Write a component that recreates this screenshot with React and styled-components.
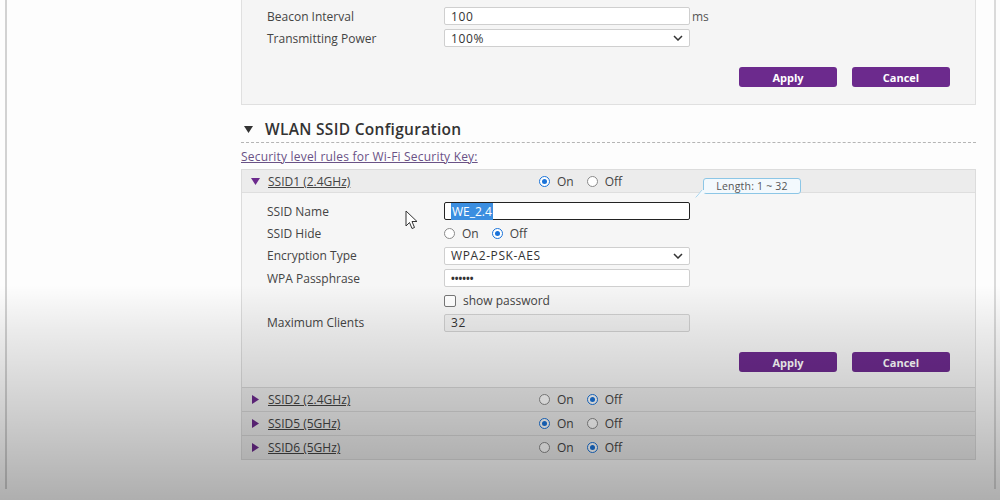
import styled, { createGlobalStyle } from "styled-components";

const GlobalStyle = createGlobalStyle`
  html, body {
    margin: 0;
    padding: 0;
    background: #fff;
    font-family: "Open Sans", "Noto Sans", "Liberation Sans", sans-serif;
    color: #333;
  }
`

const Page = styled.div`
  position: relative;
  width: 1000px;
  height: 500px;
  overflow: hidden;
  padding: 0 4px 0 5px;
  box-sizing: border-box;
  background: #fdfdfd;
`

const Frame = styled.div`
  height: 100%;
  border-left: 2px solid #d2d2d2;
  border-right: 2px solid #dadada;
  padding: 0 18px 0 234px;
  box-sizing: border-box;
`

const Shade = styled.div`
  position: absolute;
  inset: 0;
  pointer-events: none;
  background: linear-gradient(to bottom, rgba(0,0,0,0) 0%, rgba(0,0,0,0) 57%, rgba(0,0,0,0.07) 66%, rgba(0,0,0,0.18) 82%, rgba(0,0,0,0.31) 100%);
`

const Panel = styled.div`
  background: #f5f5f5;
  border: 1px solid #e0e0e0;
  margin-top: -11px;
  padding: 17px 25px 17px 25px;
  display: flex;
  flex-direction: column;
  gap: 4px;
`

const Row = styled.div`
  display: flex;
  align-items: center;
  height: 18px;
  font-size: 12px;
  color: #444;
`

const Label = styled.div`
  width: 177px;
  flex-shrink: 0;
  color: #444;
  font-size: 12px;
`

const TextBox = styled.div`
  position: relative;
  width: 246px;
  height: 18px;
  box-sizing: border-box;
  border: 1px solid ${p => (p.$focus ? "#222" : "#cfcfcf")};
  border-radius: 2px;
  background: ${p => (p.$disabled ? "#efefef" : "#fff")};
  display: flex;
  align-items: center;
  justify-content: space-between;
  padding: 0 6px 0 6px;
  font-size: 12px;
  letter-spacing: 0.6px;
  color: #333;
`

const Unit = styled.span`
  margin-left: 2px;
  font-size: 12px;
  color: #555;
`

const Selected = styled.span`
  background: #3b8ee0;
  color: #fff;
  padding: 0 1px;
  letter-spacing: 0;
`

const Dots = styled.span`
  font-size: 10px;
  font-weight: bold;
  letter-spacing: 0;
`

const Buttons = styled.div`
  display: flex;
  justify-content: flex-end;
  gap: 15px;
  margin-top: ${p => p.$top || 19}px;
`

const Btn = styled.button`
  width: 98px;
  height: 20px;
  border: none;
  border-radius: 3px;
  background: #6c2a8d;
  color: #fff;
  font-family: inherit;
  font-size: 11px;
  font-weight: bold;
  padding: 0;
`

const Heading = styled.div`
  margin-top: 14px;
  display: flex;
  align-items: center;
  gap: 12px;
  height: 20px;
  padding-left: 3px;
  font-size: 15.5px;
  font-weight: 600;
  color: #333;
  letter-spacing: 0.3px;
`

const Dashed = styled.div`
  margin-top: 3px;
  border-top: 1px dashed #b5b5b5;
`

const SecLink = styled.a`
  display: block;
  margin-top: 5px;
  font-size: 12px;
  letter-spacing: 0.2px;
  color: #6a5286;
  text-decoration: underline;
`

const SsidList = styled.div`
  margin-top: 4px;
  border: 1px solid #dcdcdc;
`

const SsidHead = styled.div`
  display: flex;
  align-items: center;
  height: ${p => (p.$first ? 22 : 23)}px;
  background: #ececec;
  border-top: ${p => (p.$first ? "none" : "1px solid #d6d6d6")};
  font-size: 12px;
`

const Caret = styled.div`
  width: 26px;
  display: flex;
  justify-content: center;
  padding-left: 1px;
  box-sizing: border-box;
`

const SsidName = styled.a`
  width: 271px;
  color: #444;
  text-decoration: underline;
`

const RadioGroup = styled.div`
  display: flex;
  align-items: center;
`

const RadioItem = styled.label`
  display: flex;
  align-items: center;
  gap: 7px;
  margin-right: 13px;
  font-size: 12px;
  color: #444;
`

const Circle = styled.span`
  width: 11px;
  height: 11px;
  box-sizing: border-box;
  border-radius: 50%;
  border: 1px solid ${p => (p.$on ? "#1a73d9" : "#8a8a8a")};
  background: #fff;
  display: flex;
  align-items: center;
  justify-content: center;
  &::after {
    content: "";
    width: 5px;
    height: 5px;
    border-radius: 50%;
    background: ${p => (p.$on ? "#1a73d9" : "transparent")};
  }
`

const SsidBody = styled.div`
  background: #f6f6f6;
  border-top: 1px solid #dedede;
  padding: 9px 25px 15px 25px;
  display: flex;
  flex-direction: column;
  gap: 4.4px;
`

const Check = styled.span`
  width: 10px;
  height: 10px;
  border: 1px solid #777;
  border-radius: 2px;
  background: #fff;
  margin: 0 7px 0 0;
`

const Tip = styled.div`
  position: absolute;
  left: 258px;
  top: -25px;
  width: 98px;
  height: 16px;
  box-sizing: border-box;
  border: 1px solid #8cc6e6;
  border-radius: 3px;
  background: #f3f9fd;
  font-size: 10.5px;
  letter-spacing: 0.2px;
  color: #555;
  display: flex;
  align-items: center;
  justify-content: center;
  white-space: nowrap;
  &::before {
    content: "";
    position: absolute;
    left: -6px;
    bottom: -5px;
    width: 8px;
    height: 8px;
    border-left: 1px solid #8cc6e6;
    background: #f3f9fd;
    transform: skewX(-40deg);
    clip-path: polygon(0 0, 100% 0, 0 100%);
  }
`

const Cursor = styled.svg`
  position: absolute;
  left: 405px;
  top: 210px;
`

function Radio({ on, off }) {
  return (
    <RadioGroup>
      <RadioItem><Circle $on={on} />On</RadioItem>
      <RadioItem><Circle $on={off} />Off</RadioItem>
    </RadioGroup>
  )
}

function Chevron() {
  return (
    <svg width="10" height="6" viewBox="0 0 10 6">
      <path d="M1 1 L5 5 L9 1" fill="none" stroke="#333" strokeWidth="1.5" />
    </svg>
  )
}

function Tri({ down, color }) {
  return down ? (
    <svg width="9" height="7" viewBox="0 0 9 7"><path d="M0 0 H9 L4.5 7 Z" fill={color} /></svg>
  ) : (
    <svg width="7" height="9" viewBox="0 0 7 9"><path d="M0 0 V9 L7 4.5 Z" fill={color} /></svg>
  )
}

const others = [
  { name: "SSID2 (2.4GHz)", on: false },
  { name: "SSID5 (5GHz)", on: true },
  { name: "SSID6 (5GHz)", on: false },
]

export default function App() {
  return (
    <Page>
      <GlobalStyle />
      <Frame>
        <Panel>
          <Row>
            <Label>Beacon Interval</Label>
            <TextBox>100</TextBox>
            <Unit>ms</Unit>
          </Row>
          <Row>
            <Label>Transmitting Power</Label>
            <TextBox>100%<Chevron /></TextBox>
          </Row>
          <Buttons $top={16}>
            <Btn>Apply</Btn>
            <Btn>Cancel</Btn>
          </Buttons>
        </Panel>

        <Heading>
          <Tri down color="#333" />
          WLAN SSID Configuration
        </Heading>
        <Dashed />
        <SecLink>Security level rules for Wi-Fi Security Key:</SecLink>

        <SsidList>
          <SsidHead $first>
            <Caret><Tri down color="#6c2a8d" /></Caret>
            <SsidName>SSID1 (2.4GHz)</SsidName>
            <Radio on />
          </SsidHead>
          <SsidBody>
            <Row>
              <Label>SSID Name</Label>
              <TextBox $focus>
                <span><Selected>WE_2.4</Selected></span>
                <Tip>Length: 1 ~ 32</Tip>
              </TextBox>
            </Row>
            <Row>
              <Label>SSID Hide</Label>
              <Radio off />
            </Row>
            <Row>
              <Label>Encryption Type</Label>
              <TextBox>WPA2-PSK-AES<Chevron /></TextBox>
            </Row>
            <Row>
              <Label>WPA Passphrase</Label>
              <TextBox><Dots>••••••</Dots></TextBox>
            </Row>
            <Row>
              <Label />
              <Check />
              show password
            </Row>
            <Row>
              <Label>Maximum Clients</Label>
              <TextBox $disabled>32</TextBox>
            </Row>
            <Buttons $top={16}>
              <Btn>Apply</Btn>
              <Btn>Cancel</Btn>
            </Buttons>
          </SsidBody>
          {others.map(s => (
            <SsidHead key={s.name}>
              <Caret><Tri color="#6c2a8d" /></Caret>
              <SsidName>{s.name}</SsidName>
              <Radio on={s.on} off={!s.on} />
            </SsidHead>
          ))}
        </SsidList>
      </Frame>
      <Cursor width="14" height="20" viewBox="0 0 14 20">
        <path d="M1 1 L1 16 L4.5 12.5 L7 18.5 L9.5 17.5 L7 11.5 L12 11.5 Z" fill="#fff" stroke="#333" strokeWidth="1" strokeLinejoin="round" />
      </Cursor>
      <Shade />
    </Page>
  )
}
